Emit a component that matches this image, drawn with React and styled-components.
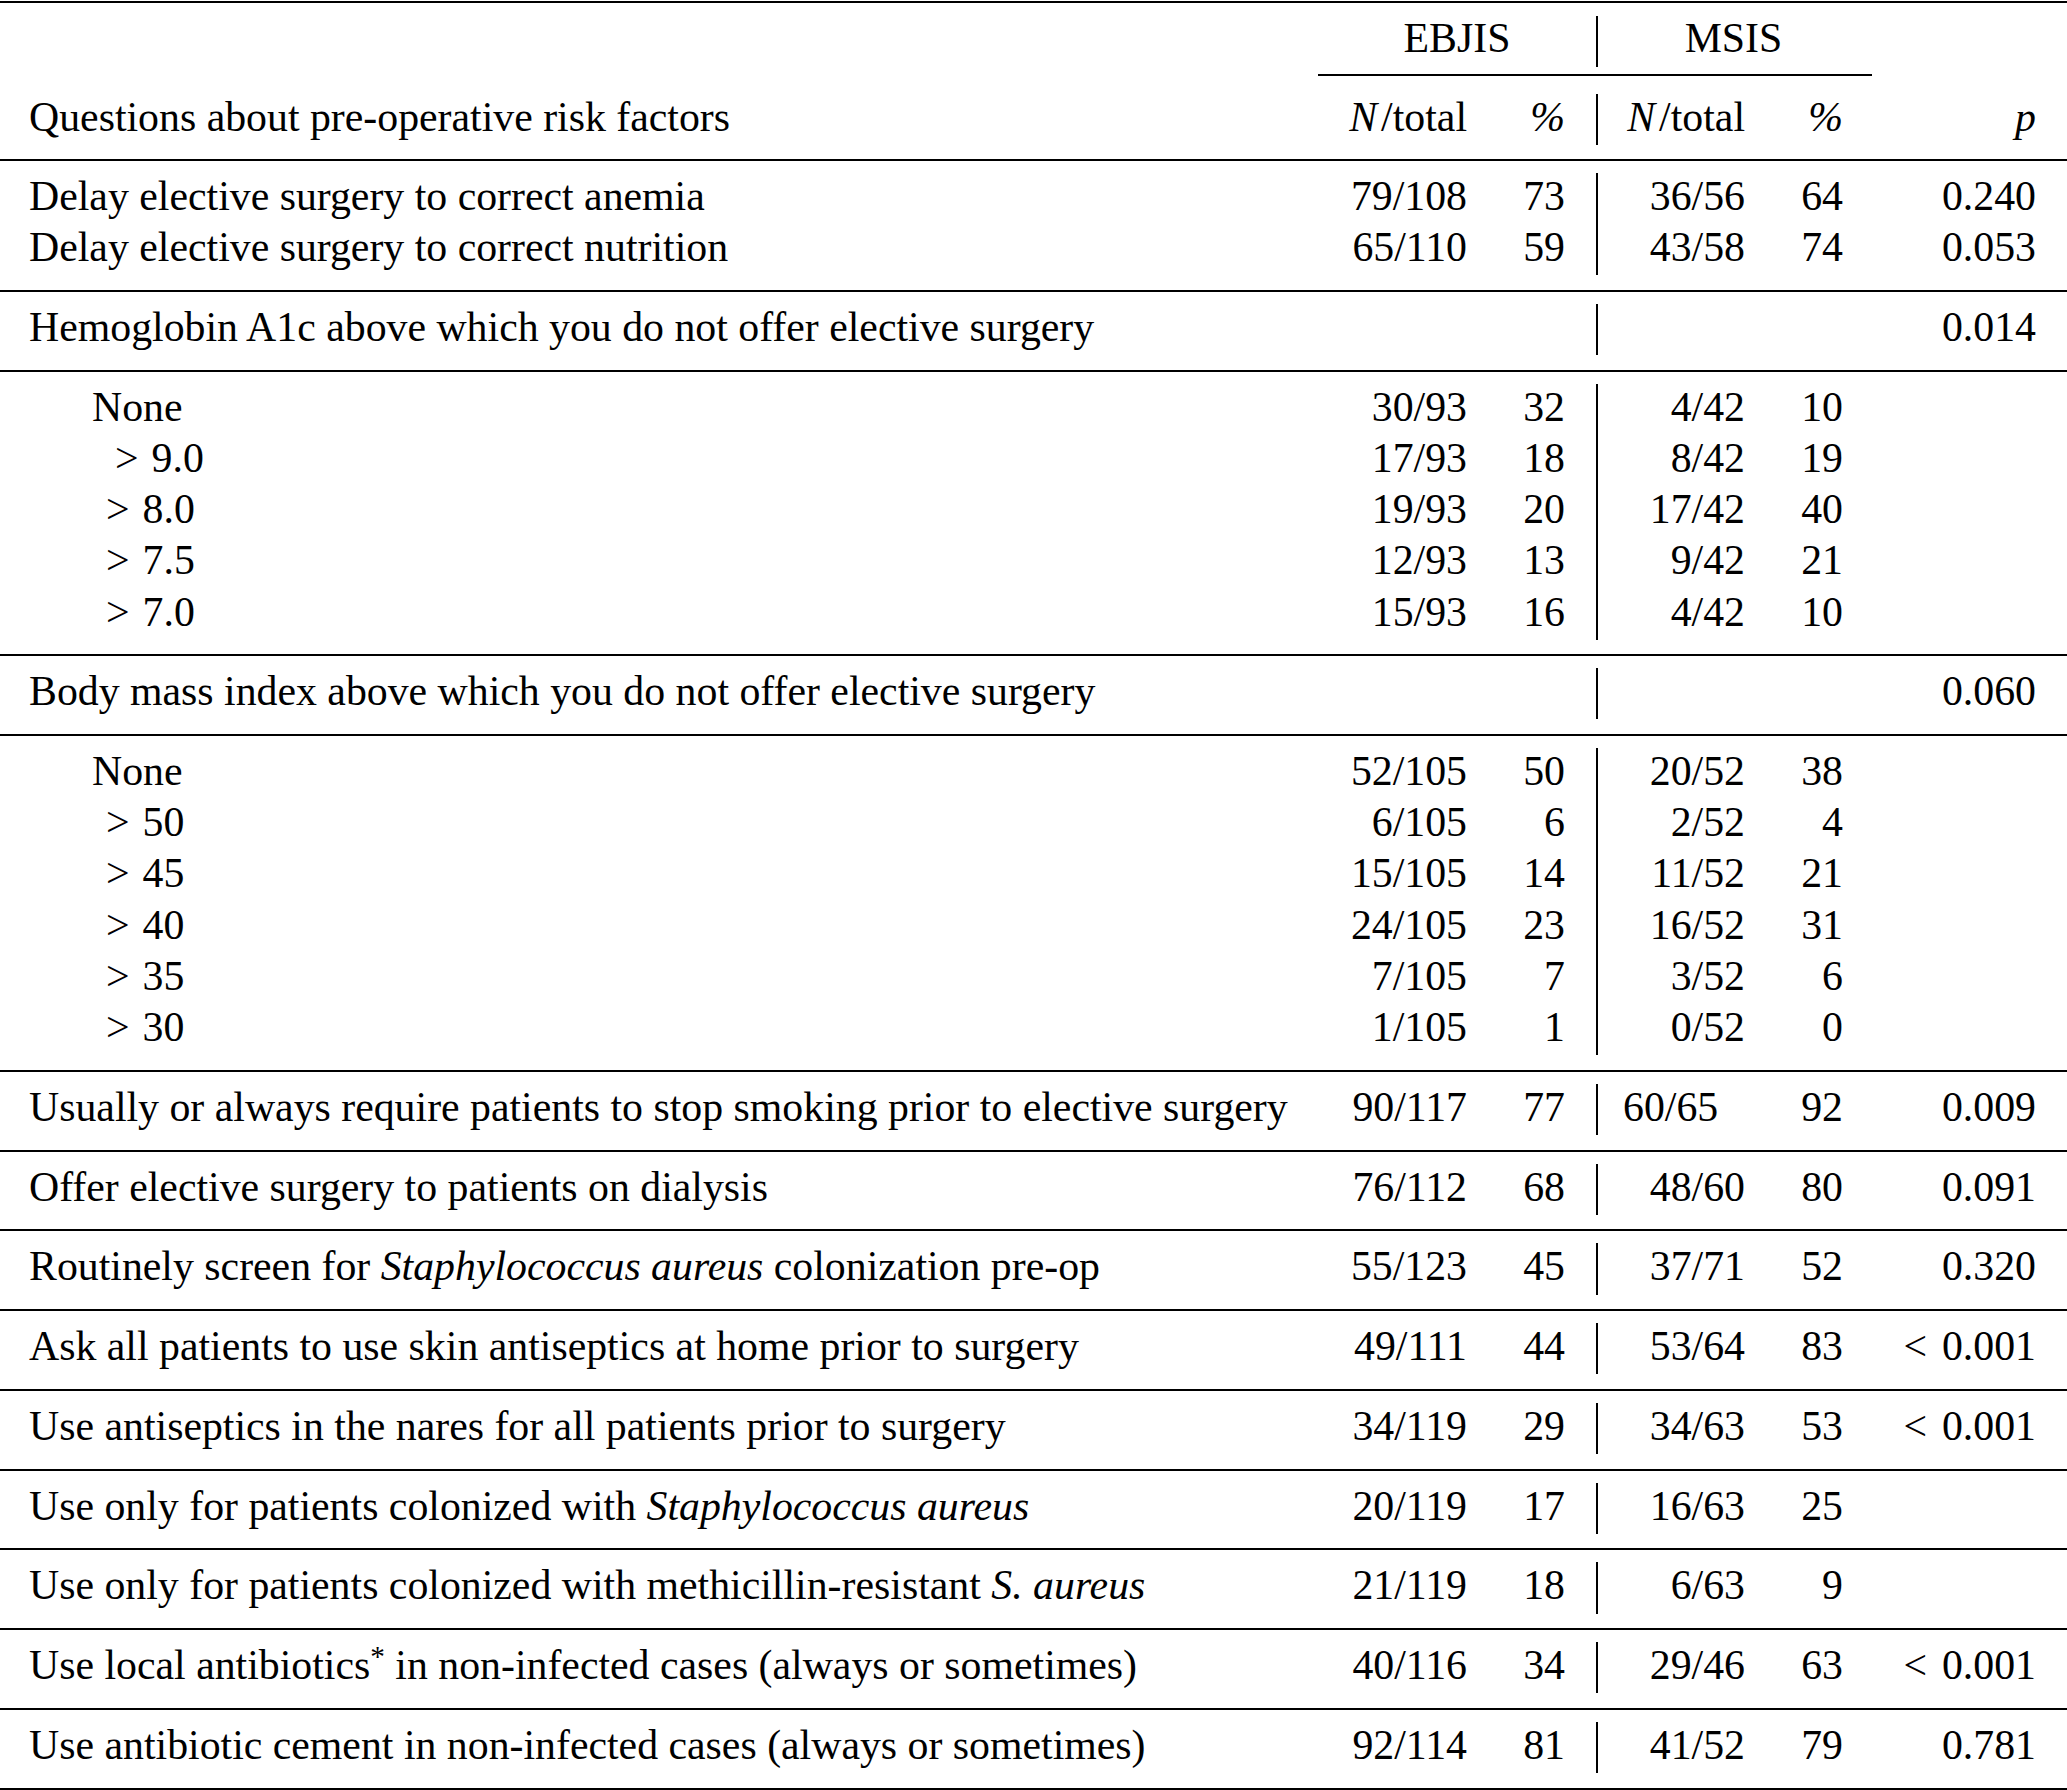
import React from 'react';
import styled, { createGlobalStyle } from 'styled-components';

const Global = createGlobalStyle`
  html, body { margin: 0; padding: 0; background: #fff; }
  body {
    font-family: "Liberation Serif", "Times New Roman", serif;
    color: #000;
  }
`;

const COLS = '1fr 167px 129px 149px 98px 193px';

const Table = styled.div`
  width: 2067px;
  margin-top: 1px;
  border-top: 2px solid #000;
  font-size: 41.8px;
`;

const Section = styled.div`
  padding: ${p => (p.$head ? '13px 31px 14px 29px' : '12px 31px 14.6px 29px')};
  border-bottom: 2px solid #000;
`;

const Row = styled.div`
  display: grid;
  grid-template-columns: ${COLS};
  height: ${p => p.$h || 51.2}px;
`;

const Cell = styled.div`
  line-height: 46.6px;
  white-space: nowrap;
  text-align: ${p => (p.$left ? 'left' : 'right')};
  padding-left: ${p => p.$pl || 0}px;
  padding-right: ${p => p.$pr || 0}px;
  border-left: ${p => (p.$bar ? '2px solid #000' : 'none')};
`;

const Label = styled.div`
  line-height: 46.6px;
  white-space: nowrap;
  text-align: left;
  padding-left: ${p => p.$indent || 0}px;
`;

const GroupHead = styled.div`
  grid-column: ${p => p.$span};
  line-height: 44px;
  text-align: center;
  padding-left: ${p => p.$pl || 0}px;
  border-left: ${p => (p.$bar ? '2px solid #000' : 'none')};
`;

const CmidRow = styled.div`
  display: grid;
  grid-template-columns: ${COLS};
  margin: 7px 0 18px;
`;

const Cmid = styled.div`
  grid-column: 2 / 7;
  height: 2px;
  background: #000;
  margin: 0 164px 0 18px;
`;

const I = styled.i`
  font-style: italic;
  margin-right: ${p => p.$mr || 0}px;
`;

const Rel = styled.span`
  margin-right: ${p => p.$mr || 13}px;
`;

const Sup = styled.sup`
  font-size: 0.7em;
  line-height: 0;
  vertical-align: 0.45em;
`;

const NT = () => (
  <>
    <I $mr={4}>N</I>/total
  </>
);

const gt = v => (
  <>
    <Rel>&gt;</Rel>
    {v}
  </>
);
const lt = v => (
  <>
    <Rel $mr={15}>&lt;</Rel>
    {v}
  </>
);

const sections = [
  [
    { label: 'Delay elective surgery to correct anemia', e: ['79/108', '73'], m: ['36/56', '64'], p: '0.240' },
    { label: 'Delay elective surgery to correct nutrition', e: ['65/110', '59'], m: ['43/58', '74'], p: '0.053' },
  ],
  [{ label: 'Hemoglobin A1c above which you do not offer elective surgery', p: '0.014' }],
  [
    { label: 'None', indent: 63, e: ['30/93', '32'], m: ['4/42', '10'] },
    { label: gt('9.0'), indent: 86, e: ['17/93', '18'], m: ['8/42', '19'] },
    { label: gt('8.0'), indent: 77, e: ['19/93', '20'], m: ['17/42', '40'] },
    { label: gt('7.5'), indent: 77, e: ['12/93', '13'], m: ['9/42', '21'] },
    { label: gt('7.0'), indent: 77, e: ['15/93', '16'], m: ['4/42', '10'] },
  ],
  [{ label: 'Body mass index above which you do not offer elective surgery', p: '0.060' }],
  [
    { label: 'None', indent: 63, e: ['52/105', '50'], m: ['20/52', '38'] },
    { label: gt('50'), indent: 77, e: ['6/105', '6'], m: ['2/52', '4'] },
    { label: gt('45'), indent: 77, e: ['15/105', '14'], m: ['11/52', '21'] },
    { label: gt('40'), indent: 77, e: ['24/105', '23'], m: ['16/52', '31'] },
    { label: gt('35'), indent: 77, e: ['7/105', '7'], m: ['3/52', '6'] },
    { label: gt('30'), indent: 77, e: ['1/105', '1'], m: ['0/52', '0'] },
  ],
  [
    {
      label: 'Usually or always require patients to stop smoking prior to elective surgery',
      e: ['90/117', '77'],
      m: ['60/65', '92'],
      p: '0.009',
      mLeft: true,
    },
  ],
  [{ label: 'Offer elective surgery to patients on dialysis', e: ['76/112', '68'], m: ['48/60', '80'], p: '0.091' }],
  [
    {
      label: (
        <>
          Routinely screen for <I>Staphylococcus aureus</I> colonization pre-op
        </>
      ),
      e: ['55/123', '45'],
      m: ['37/71', '52'],
      p: '0.320',
    },
  ],
  [
    {
      label: 'Ask all patients to use skin antiseptics at home prior to surgery',
      e: ['49/111', '44'],
      m: ['53/64', '83'],
      p: lt('0.001'),
    },
  ],
  [
    {
      label: 'Use antiseptics in the nares for all patients prior to surgery',
      e: ['34/119', '29'],
      m: ['34/63', '53'],
      p: lt('0.001'),
    },
  ],
  [
    {
      label: (
        <>
          Use only for patients colonized with <I>Staphylococcus aureus</I>
        </>
      ),
      e: ['20/119', '17'],
      m: ['16/63', '25'],
    },
  ],
  [
    {
      label: (
        <>
          Use only for patients colonized with methicillin-resistant <I>S. aureus</I>
        </>
      ),
      e: ['21/119', '18'],
      m: ['6/63', '9'],
    },
  ],
  [
    {
      label: (
        <>
          Use local antibiotics<Sup>*</Sup> in non-infected cases (always or sometimes)
        </>
      ),
      e: ['40/116', '34'],
      m: ['29/46', '63'],
      p: lt('0.001'),
    },
  ],
  [
    {
      label: 'Use antibiotic cement in non-infected cases (always or sometimes)',
      e: ['92/114', '81'],
      m: ['41/52', '79'],
      p: '0.781',
    },
  ],
];

const DataRow = ({ r }) => (
  <Row>
    <Label $indent={r.indent}>{r.label}</Label>
    <Cell>{r.e ? r.e[0] : ''}</Cell>
    <Cell $pr={31}>{r.e ? r.e[1] : ''}</Cell>
    <Cell $bar $left={r.mLeft} $pl={r.mLeft ? 25 : 0}>
      {r.m ? r.m[0] : ''}
    </Cell>
    <Cell>{r.m ? r.m[1] : ''}</Cell>
    <Cell>{r.p || ''}</Cell>
  </Row>
);

export default function App() {
  return (
    <>
      <Global />
      <Table>
        <Section $head>
          <Row $h={51}>
            <Label />
            <GroupHead $span="2 / 4" $pl={18}>
              EBJIS
            </GroupHead>
            <GroupHead $span="4 / 6" $pl={26} $bar>
              MSIS
            </GroupHead>
          </Row>
          <CmidRow>
            <Cmid />
          </CmidRow>
          <Row $h={51}>
            <Label>Questions about pre-operative risk factors</Label>
            <Cell>
              <NT />
            </Cell>
            <Cell $pr={31}>
              <I>%</I>
            </Cell>
            <Cell $bar>
              <NT />
            </Cell>
            <Cell>
              <I>%</I>
            </Cell>
            <Cell>
              <I>p</I>
            </Cell>
          </Row>
        </Section>
        {sections.map((rows, i) => (
          <Section key={i}>
            {rows.map((r, j) => (
              <DataRow key={j} r={r} />
            ))}
          </Section>
        ))}
      </Table>
    </>
  );
}
